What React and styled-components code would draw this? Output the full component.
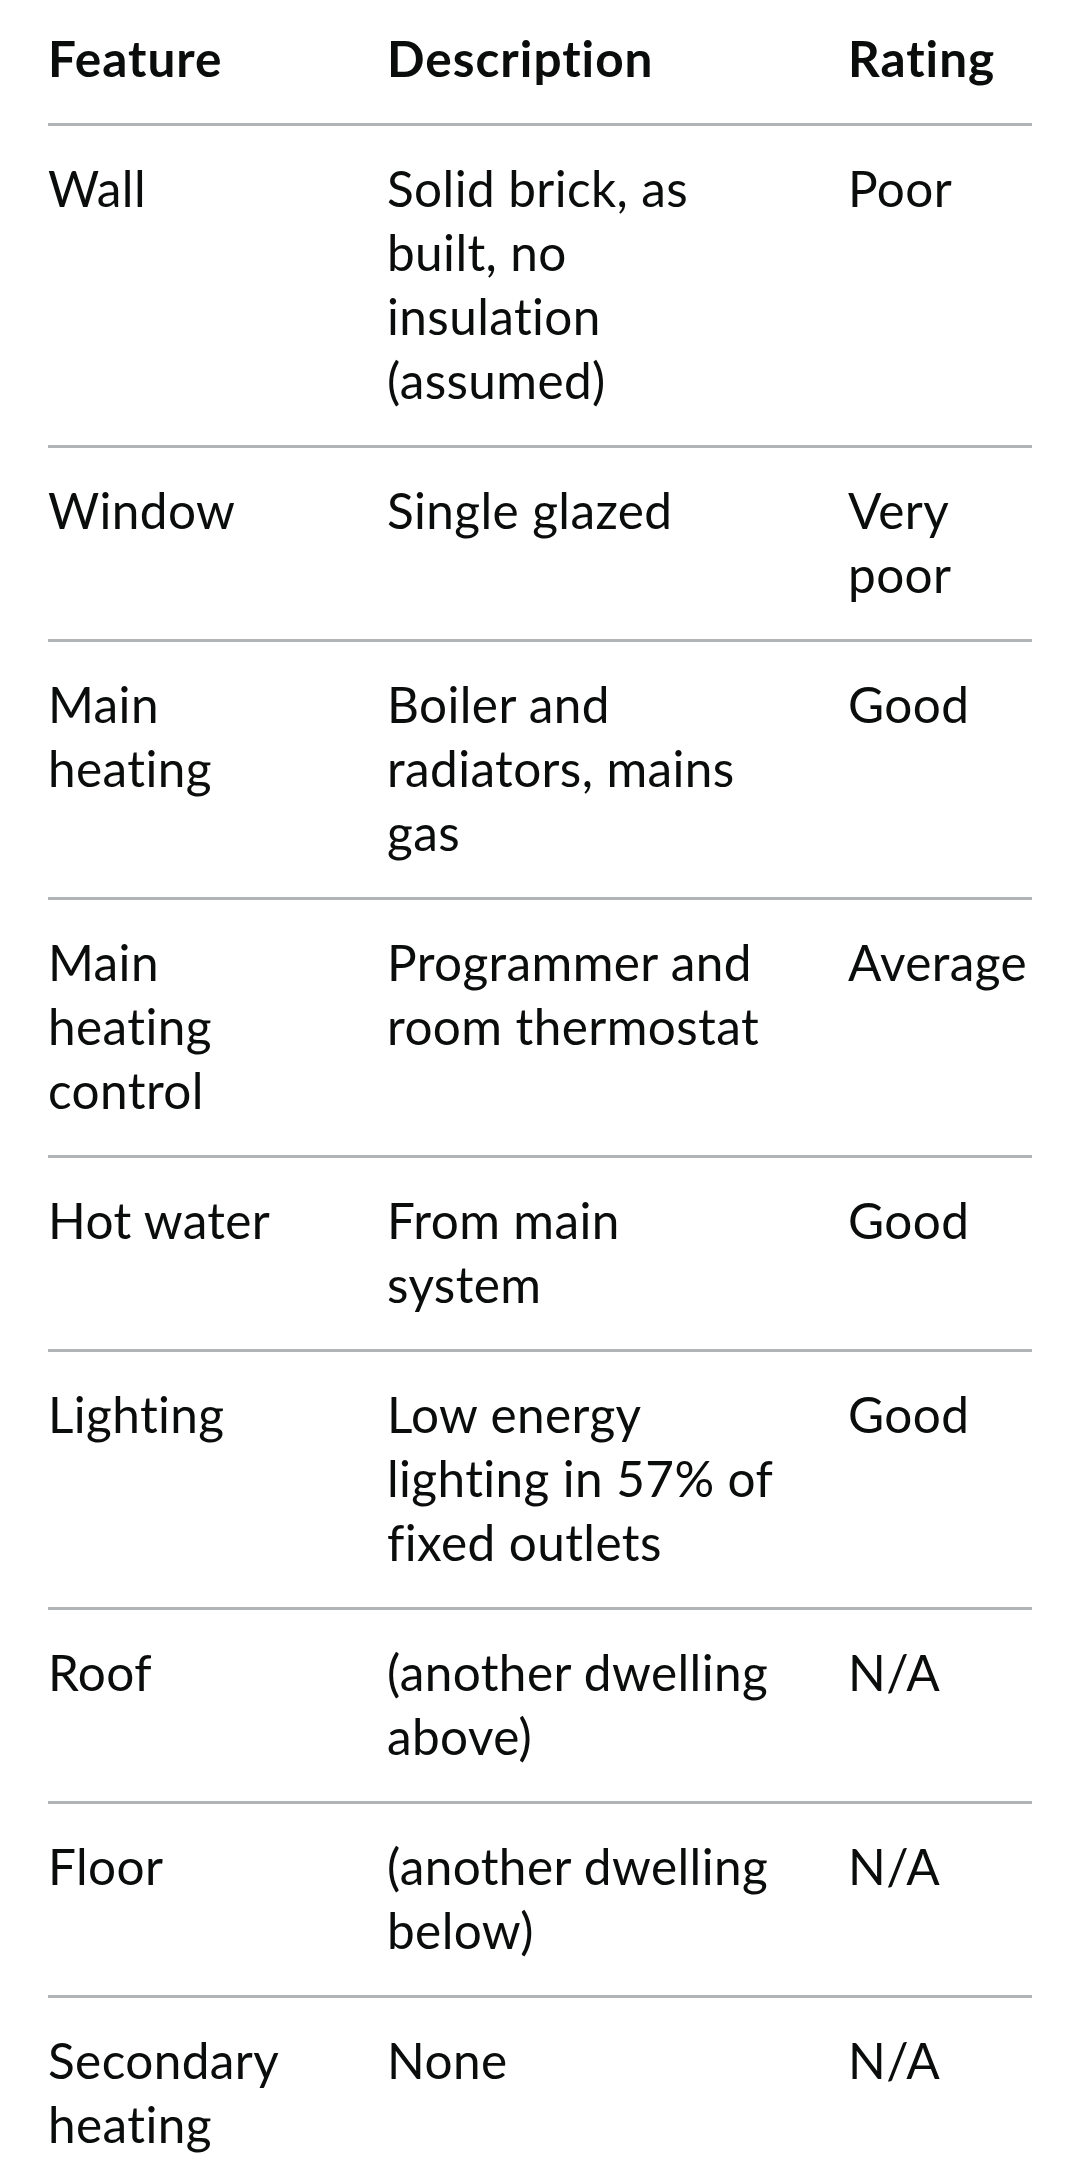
import React from "react";
import styled, { createGlobalStyle } from "styled-components";

const GlobalStyle = createGlobalStyle`
  html, body {
    margin: 0;
    padding: 0;
    background: #ffffff;
  }
  body {
    font-family: Lato, "Open Sans", Arial, sans-serif;
    color: #0b0c0c;
    -webkit-font-smoothing: antialiased;
  }
`;

const Page = styled.main`
  padding: 0 48px;
  margin-top: -4px;
`;

const Table = styled.table`
  width: 100%;
  border-collapse: collapse;
  border-spacing: 0;
  table-layout: fixed;
  font-size: 49.5px;
  line-height: 64px;
  color: #0b0c0c;
  font-variant-ligatures: none;
`;

const HeadCell = styled.th`
  box-sizing: border-box;
  width: ${(p) => p.$width}px;
  text-align: left;
  vertical-align: top;
  font-weight: 700;
  letter-spacing: 1px;
  padding: 30px 64px 33px 0;
  border-bottom: 3px solid #b1b4b6;
  &:last-child {
    padding-right: 0;
  }
`;

const Cell = styled.td`
  box-sizing: border-box;
  text-align: left;
  vertical-align: top;
  font-weight: 400;
  letter-spacing: 0.4px;
  padding: 30px 64px 33px 0;
  border-bottom: 3px solid #b1b4b6;
  &:last-child {
    padding-right: 0;
  }
`;

const Line = styled.span`
  display: block;
  white-space: nowrap;
`;

const columns = [
  { label: "Feature", width: 339 },
  { label: "Description", width: 461 },
  { label: "Rating", width: 184 },
];

const rows = [
  [["Wall"], ["Solid brick, as", "built, no", "insulation", "(assumed)"], ["Poor"]],
  [["Window"], ["Single glazed"], ["Very", "poor"]],
  [["Main", "heating"], ["Boiler and", "radiators, mains", "gas"], ["Good"]],
  [["Main", "heating", "control"], ["Programmer and", "room thermostat"], ["Average"]],
  [["Hot water"], ["From main", "system"], ["Good"]],
  [["Lighting"], ["Low energy", "lighting in 57% of", "fixed outlets"], ["Good"]],
  [["Roof"], ["(another dwelling", "above)"], ["N/A"]],
  [["Floor"], ["(another dwelling", "below)"], ["N/A"]],
  [["Secondary", "heating"], ["None"], ["N/A"]],
];

export default function App() {
  return (
    <>
      <GlobalStyle />
      <Page>
        <Table>
          <thead>
            <tr>
              {columns.map((c) => (
                <HeadCell key={c.label} $width={c.width} scope="col">
                  {c.label}
                </HeadCell>
              ))}
            </tr>
          </thead>
          <tbody>
            {rows.map((row, i) => (
              <tr key={i}>
                {row.map((lines, j) => (
                  <Cell key={j}>
                    {lines.map((l, k) => (
                      <Line key={k}>{l}</Line>
                    ))}
                  </Cell>
                ))}
              </tr>
            ))}
          </tbody>
        </Table>
      </Page>
    </>
  );
}
